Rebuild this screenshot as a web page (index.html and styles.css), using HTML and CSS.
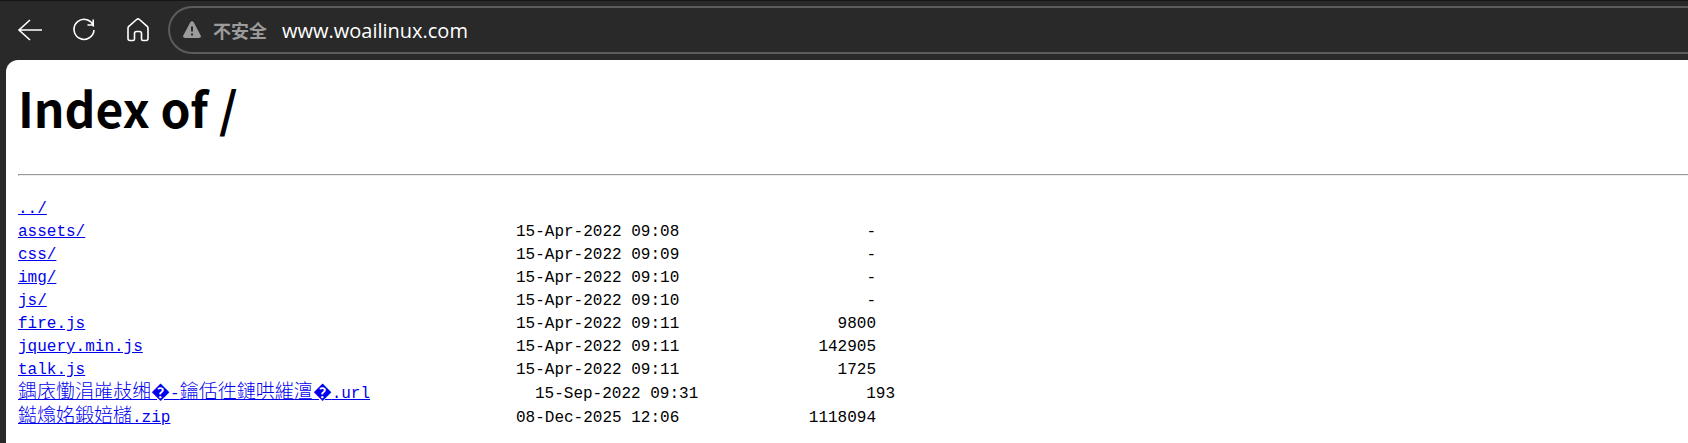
FILE: index.html
```html
<!DOCTYPE html>
<html lang="zh-CN">
<head>
  <meta charset="UTF-8" />
  <meta name="viewport" content="width=device-width, initial-scale=1.0"/>
  <title>Index of /</title>
  <link rel="stylesheet" href="styles.css">
</head>
<body>

  <!-- Browser toolbar -->
  <header class="toolbar">
    <button class="nav-btn" type="button" aria-label="Back">
      <svg width="26" height="26" viewBox="0 0 26 26"><path d="M13 3 L2 13 L13 23 M2 13 H25"/></svg>
    </button>
    <button class="nav-btn" type="button" aria-label="Refresh">
      <svg width="26" height="26" viewBox="0 0 26 26"><path d="M22.6 9.5 A10 10 0 1 0 23 13 M16.5 8 H22.2 V2.5"/></svg>
    </button>
    <button class="nav-btn" type="button" aria-label="Home">
      <svg width="26" height="26" viewBox="0 0 26 26"><path d="M11.6 2.5 Q13 1.3 14.4 2.5 L22.2 9.3 Q23 10 23 11.2 V21.5 Q23 23.5 21 23.5 H18 Q16.5 23.5 16.5 22 V16.5 Q16.5 14.5 14.5 14.5 H11.5 Q9.5 14.5 9.5 16.5 V22 Q9.5 23.5 8 23.5 H5 Q3 23.5 3 21.5 V11.2 Q3 10 3.8 9.3 Z"/></svg>
    </button>
    <div class="address-bar">
      <svg class="warning" width="20" height="18" viewBox="0 0 20 18">
        <path d="M8.2 1.6 Q10 -1 11.8 1.6 L18.6 14.2 Q19.6 17 17 17 H3 Q0.4 17 1.4 14.2 Z"/>
        <path class="mark" d="M10 5.5 V10.5 M10 12.5 V14.5"/>
      </svg>
      <label class="security" for="address">不安全</label>
      <input class="address" id="address" type="text" value="www.woailinux.com" spellcheck="false" />
    </div>
  </header>

  <!-- Directory listing -->
  <main class="page">
    <h1>Index of /</h1>
    <hr>
    <table class="listing">
      <tr><td class="name"><a href="#">../</a></td><td class="date"></td><td class="size"></td></tr>
      <tr><td class="name"><a href="#">assets/</a></td><td class="date">15-Apr-2022 09:08</td><td class="size">-</td></tr>
      <tr><td class="name"><a href="#">css/</a></td><td class="date">15-Apr-2022 09:09</td><td class="size">-</td></tr>
      <tr><td class="name"><a href="#">img/</a></td><td class="date">15-Apr-2022 09:10</td><td class="size">-</td></tr>
      <tr><td class="name"><a href="#">js/</a></td><td class="date">15-Apr-2022 09:10</td><td class="size">-</td></tr>
      <tr><td class="name"><a href="#">fire.js</a></td><td class="date">15-Apr-2022 09:11</td><td class="size">9800</td></tr>
      <tr><td class="name"><a href="#">jquery.min.js</a></td><td class="date">15-Apr-2022 09:11</td><td class="size">142905</td></tr>
      <tr><td class="name"><a href="#">talk.js</a></td><td class="date">15-Apr-2022 09:11</td><td class="size">1725</td></tr>
      <tr class="long"><td class="name"><a href="#"><span class="cjk">鍝庡懄涓嶉敊缃�</span>-<span class="cjk">鑰佸徃鏈哄繀澶�</span>.url</a></td><td class="date">15-Sep-2022 09:31</td><td class="size"><span>193</span></td></tr>
      <tr><td class="name"><a href="#"><span class="cjk">鐑熻姳鍛婄櫧</span>.zip</a></td><td class="date">08-Dec-2025 12:06</td><td class="size">1118094</td></tr>
    </table>
  </main>

</body>
</html>
```
FILE: styles.css
```css
body {
  margin: 0;
  background: #292929;
  overflow-x: hidden;
}

/* Toolbar */
.toolbar {
  display: flex;
  align-items: center;
  height: 60px;
  padding: 0 0 1px 3px;
  box-sizing: border-box;
  border-top: 1px solid #151515;
}

.nav-btn {
  display: flex;
  align-items: center;
  justify-content: center;
  width: 54px;
  height: 40px;
  padding: 0;
  border: 0;
  background: none;
  cursor: pointer;
}

.nav-btn svg {
  fill: none;
  stroke: #fff;
  stroke-width: 1.6;
}

.address-bar {
  flex: 1;
  display: flex;
  align-items: center;
  height: 48px;
  margin-left: 3px;
  padding-left: 12px;
  box-sizing: border-box;
  border: 2px solid #5c5c5c;
  border-right: 0;
  border-radius: 24px 0 0 24px;
}

.warning {
  fill: #9b9b9b;
}

.warning .mark {
  stroke: #292929;
  stroke-width: 2;
}

.security {
  margin-left: 11px;
  font: bold 18px/24px "Noto Sans CJK SC", sans-serif;
  color: #9b9b9b;
}

.address {
  flex: 1;
  margin-left: 15px;
  padding: 0;
  border: 0;
  outline: 0;
  background: none;
  color: #fff;
  font: 20px "Open Sans", "Noto Sans CJK SC", sans-serif;
}

/* Page */
.page {
  min-height: calc(100vh - 60px);
  margin-left: 6px;
  padding: 12px 0 0 12px;
  box-sizing: border-box;
  border-radius: 12px 0 0 0;
  background: #fff;
}

h1 {
  margin: 0 0 32px;
  font: bold 48px/70px "Noto Sans CJK SC", sans-serif;
  color: #000;
}

hr {
  margin: 0 0 22px;
  border: 1px inset #eee;
  border-right: 0;
}

.listing {
  border-collapse: collapse;
  font: 16px/23px "Liberation Mono", "Noto Sans CJK SC", monospace;
  color: #000;
}

.listing td {
  height: 23px;
  padding: 0;
  box-sizing: border-box;
  white-space: nowrap;
}

.listing a {
  color: #0000ee;
}

.cjk {
  font-family: "Noto Sans CJK SC", sans-serif;
  font-size: 19px;
  font-weight: 300;
  line-height: 12px;
}

.name {
  width: 498px;
}

.date {
  width: 199px;
}

.size {
  width: 161px;
  text-align: right;
}

.listing .long td {
  height: 25px;
}

.listing .long .date {
  padding-left: 19px;
}

.long .size span {
  margin-right: -19px;
}
```
